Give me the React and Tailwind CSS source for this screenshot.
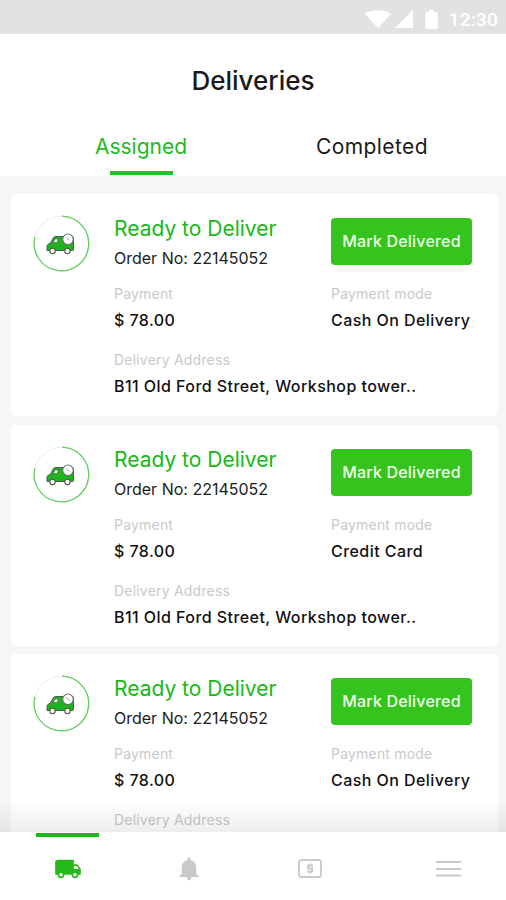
import React, { useState } from 'react';
import { MdLocalShipping } from 'react-icons/md';

const deliveries = [
  { id: 1, order: '22145052', payment: '$ 78.00', mode: 'Cash On Delivery', address: 'B11 Old Ford Street, Workshop tower..' },
  { id: 2, order: '22145052', payment: '$ 78.00', mode: 'Credit Card', address: 'B11 Old Ford Street, Workshop tower..' },
  { id: 3, order: '22145052', payment: '$ 78.00', mode: 'Cash On Delivery' },
];

function StatusBar() {
  return (
    <div className="flex h-[34px] shrink-0 items-center justify-end bg-[#e2e2e2] pt-1 pr-[8px] text-white">
      <svg className="h-[18px] w-[26px]" viewBox="0 0 26 18" fill="currentColor">
        <path d="M0 4C7-1 19-1 26 4L13 18Z" />
      </svg>
      <svg className="ml-1 h-[18px] w-[18px]" viewBox="0 0 18 18" fill="currentColor">
        <path d="M18 0V18H0Z" />
      </svg>
      <svg className="ml-3 h-[19px] w-[13px]" viewBox="0 0 13 20" fill="currentColor">
        <path d="M4 0H9V2H12Q13 2 13 3V19Q13 20 12 20H1Q0 20 0 19V3Q0 2 1 2H4Z" />
      </svg>
      <span className="ml-[11px] font-[Roboto,sans-serif] text-[19px] leading-none font-medium tracking-[0.2px]">12:30</span>
    </div>
  );
}

// Van inside of a progress ring
function VanBadge() {
  return (
    <svg className="mt-[21px] h-[57px] w-[57px] shrink-0" viewBox="0 0 57 57" fill="none">
      <circle cx="28.5" cy="28.5" r="27.3" stroke="#ececec" strokeWidth="1" />
      <path d="M29 1.2A27.3 27.3 0 1 1 1.9 22" stroke="#5fcf5a" strokeWidth="1.3" />
      <path
        d="M14 35.5V31.5Q14 30 15.5 29L17.5 28L20.2 23Q21 21.5 23 21.5H39Q40.5 21.5 40.5 23V34.5Q40.5 35.5 39.5 35.5Z"
        fill="#1fb31f"
        stroke="#4d5a50"
        strokeWidth="1"
      />
      <path d="M20 27.6L22.3 23.9H25V26L23.5 27.6Z" fill="#fff" stroke="#4d5a50" strokeWidth="0.7" />
      <circle cx="19.5" cy="36" r="2.7" fill="#fff" stroke="#4d5a50" strokeWidth="1.1" />
      <circle cx="34.5" cy="36" r="2.7" fill="#fff" stroke="#4d5a50" strokeWidth="1.1" />
      <circle cx="35" cy="24.3" r="5.3" fill="#fff" stroke="#666f68" strokeWidth="1.1" />
      <path d="M33.3 22.8L35.2 24.3L36.7 25.5" stroke="#6ccb68" strokeWidth="1" />
    </svg>
  );
}

function Field({ label, value }) {
  return (
    <div>
      <p className="text-[14px] leading-[22px] tracking-[0.2px] text-[#c9c9c9]">{label}</p>
      {value && (
        <p className="mt-[4px] text-[16px] leading-[22px] font-medium tracking-[0.44px] whitespace-nowrap text-[#111]">{value}</p>
      )}
    </div>
  );
}

function DeliveryCard({ delivery }) {
  return (
    <article className="mb-[8px] flex h-[221px] shrink-0 rounded-[5px] bg-white pl-[22px] first:mb-[9px] first:h-[222px]">
      <VanBadge />
      <div className="ml-[24px] flex-1 pt-[20px]">
        <div className="flex">
          <div className="w-[217px]">
            <h2 className="text-[21px] leading-[30px] text-[#16b916]">Ready to Deliver</h2>
            <p className="text-[16px] leading-[28px] text-[#1c1c1c]">Order No: {delivery.order}</p>
          </div>
          <button
            type="button"
            className="mt-[4px] h-[47px] w-[141px] cursor-pointer rounded-[4px] bg-[#34c41d] pb-[2px] text-[16px] font-medium tracking-[0.2px] whitespace-nowrap text-[#efffe9]"
          >
            Mark Delivered
          </button>
        </div>
        <div className="mt-[11px] mb-[18px] flex">
          <div className="w-[217px]">
            <Field label="Payment" value={delivery.payment} />
          </div>
          <Field label="Payment mode" value={delivery.mode} />
        </div>
        <Field label="Delivery Address" value={delivery.address} />
      </div>
    </article>
  );
}

function BottomNav() {
  return (
    <nav className="flex h-[68px] shrink-0 bg-white text-[#c9c9c9]">
      <button type="button" className="flex w-[135px] cursor-pointer flex-col items-center text-[#25b91c]">
        <span className="mt-px h-[4px] w-[63px] bg-[#18b918]" />
        <MdLocalShipping className="mt-[18px] h-[28px] w-[28px]" />
      </button>
      <button type="button" className="flex w-[107px] cursor-pointer justify-center pt-[25px]">
        <svg className="h-[24px] w-[20px]" viewBox="0 0 20 24" fill="currentColor">
          <path d="M10 0Q11.3 0 11.3 1.5V3Q17.3 4.3 17.3 10V17L20 19.5V20H0V19.5L2.7 17V10Q2.7 4.3 8.7 3V1.5Q8.7 0 10 0Z" />
          <path d="M7.8 20H12.2Q12 23.5 10 23.5Q8 23.5 7.8 20Z" />
        </svg>
      </button>
      <button type="button" className="flex w-[136px] cursor-pointer justify-center pt-[27px]">
        <svg className="h-[19px] w-[24px]" viewBox="0 0 24 19" fill="none" stroke="currentColor">
          <rect x="1" y="1" width="22" height="17" rx="2" strokeWidth="1.8" />
          <path d="M15 6.5H10.2V9.5H14V12.5H9M12 4.5V6.5M12 12.5V14.5" strokeWidth="2" />
        </svg>
      </button>
      <button type="button" className="ml-[46px] flex w-[49px] cursor-pointer justify-center pt-[28px]">
        <svg className="h-[18px] w-[25px]" viewBox="0 0 25 18" stroke="currentColor" strokeWidth="2.2">
          <path d="M0 2H25M0 9H25M0 15.5H25" />
        </svg>
      </button>
    </nav>
  );
}

export default function App() {
  const [tab, setTab] = useState('assigned');

  return (
    <div className="flex h-[900px] w-[506px] flex-col overflow-hidden bg-[#f4f6f8] font-[Inter,sans-serif]">
      <StatusBar />
      <header className="h-[142px] shrink-0 bg-white pt-[31px]">
        <h1 className="text-center text-[26px] leading-[32px] font-medium text-[#1a1a1a]">Deliveries</h1>
        <div className="mt-[33px] flex pl-[26px] text-[21px] leading-[34px]">
          <button
            type="button"
            onClick={() => setTab('assigned')}
            className={`flex w-[230px] cursor-pointer flex-col items-center ${tab === 'assigned' ? 'text-[#23b923]' : 'text-[#1a1a1a]'}`}
          >
            Assigned
            {tab === 'assigned' && <span className="mt-[7px] h-[4px] w-[63px] bg-[#28bd22]" />}
          </button>
          <button
            type="button"
            onClick={() => setTab('completed')}
            className={`flex w-[232px] cursor-pointer flex-col items-center tracking-[0.4px] ${tab === 'completed' ? 'text-[#23b923]' : 'text-[#1a1a1a]'}`}
          >
            Completed
            {tab === 'completed' && <span className="mt-[7px] h-[4px] w-[63px] bg-[#28bd22]" />}
          </button>
        </div>
      </header>
      <main className="relative flex min-h-0 flex-1 flex-col overflow-hidden pt-[18px] pr-[8px] pl-[11px]">
        {deliveries.map((d) => (
          <DeliveryCard key={d.id} delivery={d} />
        ))}
        {/* Fade above the navigation */}
        <div className="pointer-events-none absolute inset-x-0 bottom-0 h-[32px] bg-linear-to-b from-black/0 to-black/7" />
      </main>
      <BottomNav />
    </div>
  );
}
